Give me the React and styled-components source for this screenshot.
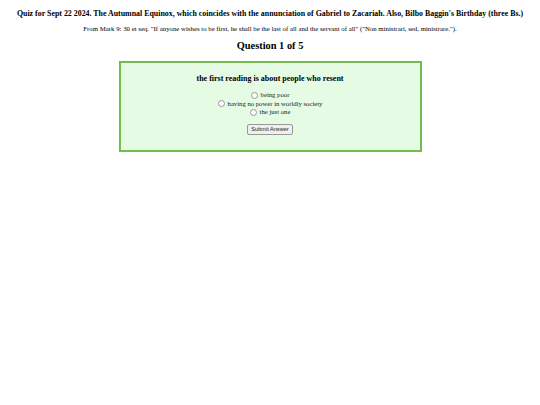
import React, { useState } from "react";
import styled, { createGlobalStyle } from "styled-components";

const Global = createGlobalStyle`
  html, body { margin: 0; padding: 0; background: #fff; }
  body { font-family: "Liberation Serif", "Times New Roman", serif; color: #000; }
`;

const Page = styled.div`
  display: flex;
  flex-direction: column;
  align-items: center;
  padding-top: 9px;
`;

const Title = styled.h1`
  margin: 0;
  font-size: 7.9px;
  font-weight: bold;
  text-align: center;
  white-space: nowrap;
`;

const Intro = styled.p`
  margin: 7px 0 0 0;
  font-size: 6.8px;
  text-align: center;
  white-space: nowrap;
`;

const Counter = styled.h2`
  margin: 8px 0 0 0;
  font-size: 10.4px;
  font-weight: bold;
`;

const Card = styled.div`
  margin-top: 10px;
  width: 303px;
  box-sizing: border-box;
  border: 2px solid #72bd50;
  background: #e6fbe4;
  display: flex;
  flex-direction: column;
  align-items: center;
  padding: 11px 0 15px 0;
`;

const Question = styled.h3`
  margin: 0;
  font-size: 8px;
  font-weight: bold;
`;

const Options = styled.div`
  margin-top: 8px;
  display: flex;
  flex-direction: column;
  align-items: center;
`;

const Option = styled.label`
  display: flex;
  align-items: center;
  gap: 3px;
  font-size: 6.7px;
  line-height: 8.6px;
  color: #222;
`;

const Radio = styled.span`
  width: 5px;
  height: 5px;
  border-radius: 50%;
  border: 0.7px solid #999;
  background: #fff;
  display: inline-block;
`;

const Button = styled.button`
  margin-top: 7px;
  font-family: "Liberation Sans", Arial, sans-serif;
  font-size: 5.6px;
  padding: 1.5px 3px;
  background: #efefef;
  border: 0.7px solid #999;
  border-radius: 2px;
  color: #222;
`;

const answers = ["being poor", "having no power in worldly society", "the just one"];

export default function App() {
  const [picked, setPicked] = useState(null);
  return (
    <>
      <Global />
      <Page>
        <Title>
          Quiz for Sept 22 2024. The Autumnal Equinox, which coincides with the annunciation of Gabriel to Zacariah. Also, Bilbo Baggin's Birthday (three Bs.)
        </Title>
        <Intro>
          From Mark 9: 30 et seq. "If anyone wishes to be first, he shall be the last of all and the servant of all" ("Non ministrari, sed, ministrare.").
        </Intro>
        <Counter>Question 1 of 5</Counter>
        <Card>
          <Question>the first reading is about people who resent</Question>
          <Options>
            {answers.map((a, i) => (
              <Option key={a} onClick={() => setPicked(i)}>
                <Radio />
                {a}
              </Option>
            ))}
          </Options>
          <Button>Submit Answer</Button>
        </Card>
      </Page>
    </>
  );
}
